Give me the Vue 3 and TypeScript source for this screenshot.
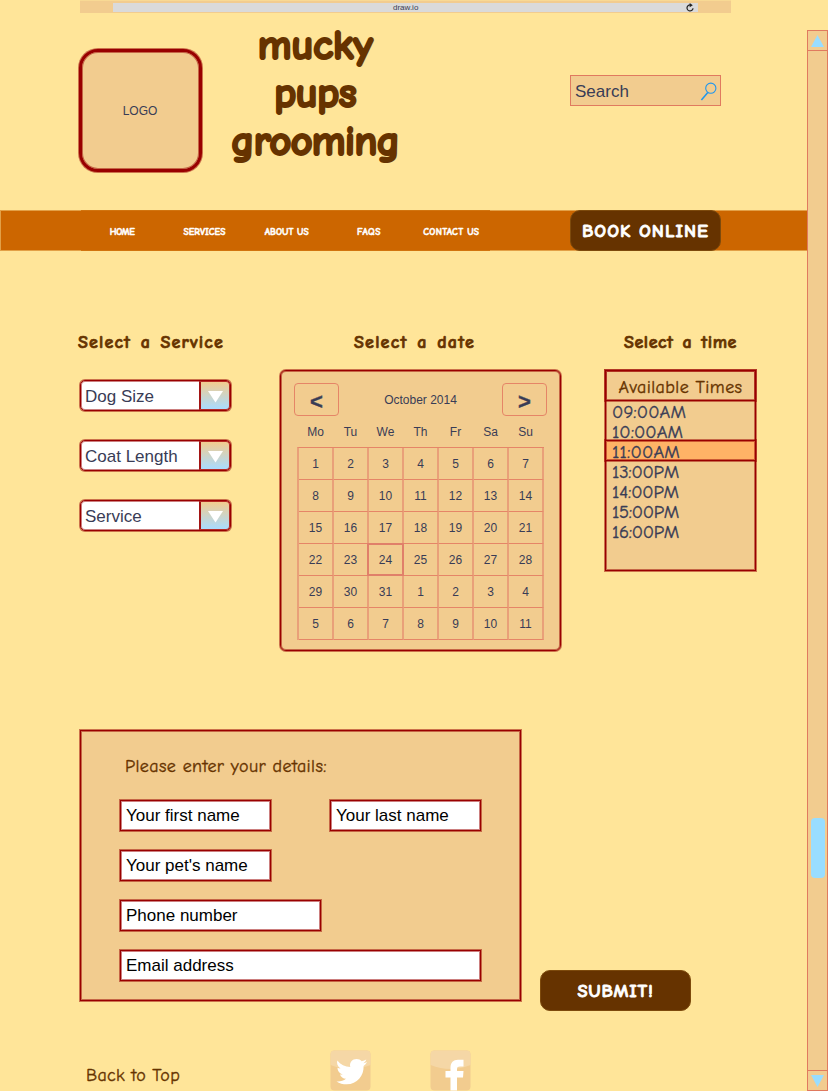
<script setup lang="ts">
import type { Directive } from 'vue'

interface Label { text: string; width: number }

// Spreads the letters of a line so that it takes up exactly the given width.
const vFit: Directive<HTMLElement, number> = {
  mounted(el, { value }) {
    const count = (el.textContent ?? '').length
    el.style.letterSpacing = `${(value - el.getBoundingClientRect().width) / count}px`
  },
}

const title: Label[] = [
  { text: 'mucky', width: 115 },
  { text: 'pups', width: 82 },
  { text: 'grooming', width: 168 },
]
const links: Label[] = [
  { text: 'HOME', width: 25 },
  { text: 'SERVICES', width: 42 },
  { text: 'ABOUT US', width: 44 },
  { text: 'FAQS', width: 24 },
  { text: 'CONTACT US', width: 56 },
]
const selects = ['Dog Size', 'Coat Length', 'Service']
const weekdays = ['Mo', 'Tu', 'We', 'Th', 'Fr', 'Sa', 'Su']
const days = Array.from({ length: 42 }, (_, i) => (i < 31 ? i + 1 : i - 30))
const times: Label[] = [
  { text: '09:00AM', width: 74 },
  { text: '10:00AM', width: 71 },
  { text: '11:00AM', width: 68 },
  { text: '13:00PM', width: 67 },
  { text: '14:00PM', width: 67 },
  { text: '15:00PM', width: 67 },
  { text: '16:00PM', width: 67 },
]
</script>

<template>
  <div class="page">
    <main class="main">
      <div class="browser">
        <div class="address">
          <span>draw.io</span>
          <svg class="reload" width="10" height="10" viewBox="0 0 10 10">
            <path d="M5.6 2 A3 3 0 1 0 8 5.2" fill="none" stroke="#222" stroke-width="1.2" />
            <path d="M4.7 0 L7.8 2.3 L4.7 4.2 Z" fill="#222" />
          </svg>
        </div>
      </div>

      <header class="header">
        <div class="logo">LOGO</div>
        <h1 class="title hand">
          <div v-for="line in title" :key="line.text"><span v-fit="line.width">{{ line.text }}</span></div>
        </h1>
        <div class="search">
          <span>Search</span>
          <svg width="18" height="20" viewBox="0 0 18 20" fill="none" stroke="#1f96ee" stroke-width="1.1">
            <circle cx="10.8" cy="6.2" r="5.1" />
            <path d="M7.8 10.4 L1.4 18.1" stroke-width="1.5" />
          </svg>
        </div>
      </header>

      <nav class="nav hand">
        <div class="links">
          <a v-for="link in links" :key="link.text"><span v-fit="link.width">{{ link.text }}</span></a>
        </div>
        <button class="button hand"><span v-fit="127">BOOK ONLINE</span></button>
      </nav>

      <section class="booking">
        <div class="services">
          <h2 class="heading hand"><span v-fit="146">Select a Service</span></h2>
          <div v-for="name in selects" :key="name" class="select stroke">
            <span class="value">{{ name }}</span>
            <span class="drop">
              <svg width="15" height="12" viewBox="0 0 15 12"><path d="M0 0 H15 L7.5 11.5 Z" fill="#fff" /></svg>
            </span>
          </div>
        </div>

        <div class="dates">
          <h2 class="heading hand"><span v-fit="121">Select a date</span></h2>
          <div class="calendar stroke">
            <div class="month">
              <button>&lt;</button>
              <span>October 2014</span>
              <button>&gt;</button>
            </div>
            <div class="weekdays"><span v-for="d in weekdays" :key="d">{{ d }}</span></div>
            <div class="days">
              <span v-for="(d, i) in days" :key="i" :class="{ today: i === 23 }">{{ d }}</span>
            </div>
          </div>
        </div>

        <div class="slots">
          <h2 class="heading hand"><span v-fit="113">Select a time</span></h2>
          <div class="list stroke">
            <div class="list-title hand stroke"><span v-fit="124">Available Times</span></div>
            <div v-for="(t, i) in times" :key="t.text" class="slot hand" :class="{ chosen: i === 2, stroke: i === 2 }">
              <span v-fit="t.width">{{ t.text }}</span>
            </div>
          </div>
        </div>
      </section>

      <section class="entry">
        <form class="details stroke">
          <p class="prompt hand"><span v-fit="202">Please enter your details:</span></p>
          <div class="row">
            <div class="field stroke">Your first name</div>
            <div class="field stroke">Your last name</div>
          </div>
          <div class="row"><div class="field stroke">Your pet's name</div></div>
          <div class="row"><div class="field phone stroke">Phone number</div></div>
          <div class="row"><div class="field email stroke">Email address</div></div>
        </form>
        <button class="button submit hand"><span v-fit="76">SUBMIT!</span></button>
      </section>

      <footer class="footer">
        <a class="back hand"><span v-fit="94">Back to Top</span></a>
        <svg class="social" width="41" height="41" viewBox="0 0 41 41">
          <rect x=".5" y=".5" width="40" height="40" rx="4" fill="#f2cc8f" />
          <path d="M.5 15 V4.5 A4 4 0 0 1 4.5 .5 H36.5 A4 4 0 0 1 40.5 4.5 V15 Q20.5 23 .5 15Z" fill="#f5d7a6" />
          <path d="M7.3 10.5 C10.5 14.7 15 17 20.3 17.1 C19.1 12.3 22.4 9 26.6 9 C28.6 9 30.5 9.9 31.7 11.2 C33.4 10.9 34.9 10.3 36.3 9.4 C35.7 11.2 34.7 12.3 33.3 13.2 C34.8 13.1 35.9 12.7 37.1 12.1 C36.2 13.7 35 14.9 33.6 15.9 C34 25.5 27.2 34.3 16.7 34.3 C12.9 34.3 9.5 33.3 6.5 31.4 C10.2 31.7 13.4 30.8 16 28.8 C13 28.5 10.9 26.9 10 24.4 C11 24.6 11.9 24.5 12.8 24.3 C9.6 23.5 7.5 20.9 7.5 17.7 C8.5 18.2 9.4 18.5 10.5 18.5 C7.5 16.3 6.5 13.2 7.3 10.5Z" fill="#fff" />
        </svg>
        <svg class="social" width="41" height="41" viewBox="0 0 41 41">
          <rect x=".5" y=".5" width="40" height="40" rx="4" fill="#f2cc8f" />
          <path d="M.5 15 V4.5 A4 4 0 0 1 4.5 .5 H36.5 A4 4 0 0 1 40.5 4.5 V15 Q20.5 23 .5 15Z" fill="#f5d7a6" />
          <path d="M20.5 40.5 V27.5 H15.5 V21 H20.5 V18 C20.5 12.5 23.3 9.8 28 9.8 H33.5 V16.5 H30 C28 16.5 27 17.2 27 19 V21 H33.5 L33 27.5 H27 V40.5Z" fill="#fff" />
        </svg>
      </footer>
    </main>

    <aside class="scrollbar">
      <div class="arrow"><svg width="13" height="12" viewBox="0 0 13 12"><path d="M0 12 H13 L6.5 0Z" fill="#9df" /></svg></div>
      <div class="track"><div class="thumb"></div></div>
      <div class="arrow"><svg width="13" height="12" viewBox="0 0 13 12"><path d="M0 0 H13 L6.5 12Z" fill="#9df" /></svg></div>
    </aside>
  </div>
</template>

<style>
body {
  margin: 0;
  background: #ffe599;
}
</style>

<style scoped>
.page, .page * {
  box-sizing: border-box;
}
.page {
  display: flex;
  width: 828px;
  height: 1091px;
  overflow: hidden;
  background: #ffe599;
  color: #393c56;
  font-family: "Liberation Sans", Arial, sans-serif;
}
.main {
  width: 807px;
}
.hand {
  font-family: "Comic Sans MS", "Comic Neue", "Open Sans", sans-serif;
  white-space: nowrap;
  -webkit-text-stroke: .35px currentColor;
}
h1, h2, p {
  margin: 0;
}
button {
  padding: 0;
  color: inherit;
}
.stroke {
  border: 1px solid #900;
  box-shadow: 0 0 0 1px rgba(153, 0, 0, .5), inset 0 0 0 1px rgba(153, 0, 0, .5);
}

.browser {
  width: 651px;
  height: 13px;
  margin-left: 80px;
  padding: 2px 33px;
  background: #f2cc8f;
  border-top: 1px solid #f8d994;
}
.address {
  display: flex;
  align-items: center;
  justify-content: flex-end;
  height: 9px;
  background: #dadada;
  font-size: 8px;
  line-height: 9px;
}
.address span {
  width: 28px;
  margin-right: 264px;
}
.reload {
  margin-right: 3px;
}

.header {
  display: flex;
  height: 197px;
  padding-left: 79px;
}
.logo {
  display: flex;
  align-items: center;
  justify-content: center;
  width: 123px;
  height: 123px;
  margin-top: 36px;
  border: 3px solid #900;
  border-radius: 19px;
  box-shadow: 0 0 0 1px rgba(153, 0, 0, .5), inset 0 0 0 1px rgba(153, 0, 0, .5);
  background: #f2cc8f;
  font-size: 12px;
  padding-right: 1px;
}
.title {
  width: 226px;
  margin-top: 8px;
  color: #630;
  font-size: 43px;
  line-height: 48px;
  text-align: center;
  -webkit-text-stroke: 2px #630;
}
.search {
  display: flex;
  align-items: center;
  justify-content: space-between;
  width: 151px;
  height: 31px;
  margin: 62px 0 0 142px;
  padding: 2px 2px 0 4px;
  border: 1px solid #e07a5f;
  background: #f2cc8f;
  font-size: 17px;
}

.nav {
  display: flex;
  height: 41px;
  border: 1px solid #e2a047;
  border-right: 0;
  background: #c60;
  color: #fff;
  font-weight: 700;
}
.links {
  display: flex;
  width: 409px;
  height: 41px;
  margin: -1px 80px 0;
  border: solid #d1740f;
  border-width: 1px 0;
  font-size: 9.5px;
  -webkit-text-stroke: .5px #fff;
}
.links a {
  flex: none;
  width: 82.3px;
  line-height: 41px;
  text-align: center;
}
.button {
  width: 151px;
  height: 41px;
  padding-top: 1px;
  border: 1px solid #7d4a0c;
  border-radius: 10px;
  background: #630;
  color: #fff;
  font-size: 18.5px;
  font-weight: 700;
  -webkit-text-stroke: .8px #fff;
}
.nav .button {
  margin-top: -1px;
}

.booking {
  display: flex;
  height: 400px;
  margin-top: 79px;
  padding-left: 80px;
}
.heading {
  height: 40px;
  color: #630;
  font-size: 18px;
  line-height: 25px;
  word-spacing: 2px;
  -webkit-text-stroke: .7px #630;
}
.services {
  width: 151px;
  margin-right: 49px;
}
.services .heading {
  height: 50px;
  margin-left: -2px;
}
.select {
  display: flex;
  height: 31px;
  margin-bottom: 29px;
  border-radius: 5px;
  background: #fff;
  font-size: 17px;
}
.value {
  flex: 1;
  padding-left: 4px;
  line-height: 31px;
}
.drop {
  display: flex;
  justify-content: center;
  width: 31px;
  padding-top: 9px;
  border: 1px solid #b52a24;
  border-left: 2px solid #a31414;
  border-radius: 0 4px 4px 0;
  background: linear-gradient(#f2cc8f, #a9dcff);
}
.dates {
  width: 281px;
  margin-right: 44px;
}
.dates .heading {
  padding-left: 74px;
}
.calendar {
  height: 281px;
  padding: 12px 13px;
  border-radius: 6px;
  background: #f2cc8f;
  font-size: 12px;
}
.month {
  display: flex;
  align-items: center;
  justify-content: space-between;
  height: 33px;
}
.month button {
  width: 45px;
  height: 33px;
  padding-top: 4px;
  border: 1px solid #e58567;
  border-radius: 4px;
  background: none;
  font: 700 22px "Liberation Sans", sans-serif;
  -webkit-text-stroke: .4px currentColor;
}
.weekdays {
  display: grid;
  grid-template-columns: repeat(7, 35px);
  height: 31px;
  padding-left: 4px;
  line-height: 33px;
  text-align: center;
}
.days {
  display: grid;
  grid-template-columns: repeat(7, 35px);
  grid-auto-rows: 32px;
  width: 247px;
  margin-left: 3px;
  border: solid #e9a079;
  border-width: 0 0 0 2px;
  border-top: 1px solid #e58567;
  line-height: 32px;
  text-align: center;
}
.days span {
  border-right: 2px solid #e9a079;
  border-bottom: 1px solid #e58567;
}
.days .today {
  margin: -1px 0 0 -2px;
  border: 2px solid #e0806a;
  line-height: 30px;
}

.slots {
  width: 151px;
}
.slots .heading {
  padding-left: 19px;
}
.list {
  height: 201px;
  background: #f2cc8f;
  font-size: 18.5px;
}
.list-title {
  height: 31px;
  margin: -1px -1px 0;
  color: #630;
  font-size: 18px;
  line-height: 33px;
  text-align: center;
}
.slot {
  height: 20px;
  padding-left: 6px;
  line-height: 23px;
}
.chosen {
  height: 21px;
  margin: -1px -1px 0;
  background: #ffb366;
}

.entry {
  display: flex;
  align-items: flex-end;
  height: 281px;
  margin: 0 0 0 80px;
}
.details {
  width: 441px;
  height: 271px;
  margin: 0 19px 10px 0;
  padding: 24px 39px 0;
  background: #f2cc8f;
}
.prompt {
  height: 45px;
  padding-left: 5px;
  color: #630;
  font-size: 18px;
  line-height: 23px;
}
.row {
  display: flex;
  gap: 59px;
  height: 50px;
}
.field {
  width: 151px;
  height: 31px;
  padding-left: 5px;
  background: #fff;
  color: #000;
  font-size: 17px;
  line-height: 30px;
}
.phone {
  width: 201px;
}
.email {
  width: 361px;
}

.footer {
  display: flex;
  height: 80px;
  margin-top: 39px;
  padding-left: 86px;
}
.back {
  width: 244px;
  color: #630;
  font-size: 18px;
  line-height: 52px;
}
.social {
  margin-right: 59px;
}

.scrollbar {
  display: flex;
  flex-direction: column;
  width: 21px;
  height: 1061px;
  margin-top: 30px;
  border: 1px solid #e07a5f;
  background: #f2cc8f;
}
.arrow {
  display: flex;
  align-items: center;
  justify-content: center;
  height: 19px;
}
.track {
  flex: 1;
  padding: 767px 2.5px 0;
  border: solid #e07a5f;
  border-width: 1px 0;
}
.thumb {
  height: 60px;
  border-radius: 4px;
  background: #9df;
}
</style>
